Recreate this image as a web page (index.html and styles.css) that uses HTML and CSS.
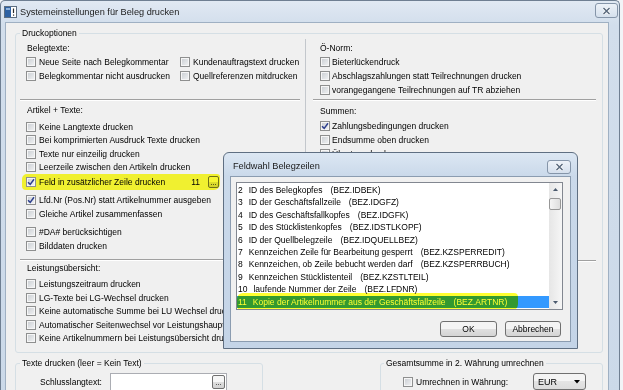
FILE: index.html
```html
<!DOCTYPE html>
<html lang="de">
<head>
  <meta charset="UTF-8">
  <title>Systemeinstellungen für Beleg drucken</title>
  <link rel="stylesheet" href="styles.css">
</head>
<body>

  <div class="window">
    <div class="titlebar">
      <svg class="app-icon" width="13" height="12" viewBox="0 0 13 12">
        <rect x="0.5" y="0.5" width="12" height="11" fill="#fff" stroke="#5d6e80"/>
        <rect x="1" y="1" width="6" height="10" fill="#2f62a3"/>
        <rect x="2" y="2" width="4" height="2" fill="#8fb3dd"/>
        <path d="M9.5 2.5 V7" stroke="#2b2b2b" stroke-width="1.2"/>
        <rect x="9" y="8.5" width="1.2" height="1.2" fill="#2b2b2b"/>
      </svg>
      <span class="title">Systemeinstellungen für Beleg drucken</span>
      <span class="close main-close">
        <svg width="9" height="8" viewBox="0 0 9 8">
          <path d="M1.5 1 L7.5 7 M7.5 1 L1.5 7" stroke="#fff" stroke-width="3"/>
          <path d="M1.5 1 L7.5 7 M7.5 1 L1.5 7" stroke="#5a6a7e" stroke-width="1.5"/>
        </svg>
      </span>
    </div>

    <div class="frame">
      <div class="client">

        <div class="group main-group">
          <div class="group-title">Druckoptionen</div>
          <div class="columns">

            <div class="col col-left">
              <div class="head">Belegtexte:</div>
              <div class="pair-grid">
                <div class="row"><span class="box"></span>Neue Seite nach Belegkommentar</div>
                <div class="row"><span class="box"></span>Kundenauftragstext drucken</div>
                <div class="row"><span class="box"></span>Belegkommentar nicht ausdrucken</div>
                <div class="row"><span class="box"></span>Quellreferenzen mitdrucken</div>
              </div>

              <div class="divider div-left"></div>

              <div class="head head-after">Artikel + Texte:</div>
              <div class="row tight first">
                <span class="box"></span>Keine Langtexte drucken</div>
              <div class="row tight"><span class="box"></span>Bei komprimierten Ausdruck Texte drucken</div>
              <div class="row tight"><span class="box"></span>Texte nur einzeilig drucken</div>
              <div class="row tight"><span class="box"></span>Leerzeile zwischen den Artikeln drucken</div>
              <div class="row field-row">
                <span class="marker"></span>
                <span class="box checked"><svg viewBox="0 0 8 8"><path d="M1 4.2 L3.2 6.4 L7 1.2"/></svg></span>
                Feld in zusätzlicher Zeile drucken
                <span class="field-value">11</span>
                <span class="dots">...</span>
              </div>
              <div class="row lfd"><span class="box checked"><svg viewBox="0 0 8 8"><path d="M1 4.2 L3.2 6.4 L7 1.2"/></svg></span>Lfd.Nr (Pos.Nr) statt Artikelnummer ausgeben</div>
              <div class="row"><span class="box"></span>Gleiche Artikel zusammenfassen</div>
              <div class="row da"><span class="box"></span>#DA# berücksichtigen</div>
              <div class="row"><span class="box"></span>Bilddaten drucken</div>

              <div class="divider div-left div-lower"></div>

              <div class="head">Leistungsübersicht:</div>
              <div class="row first-l"><span class="box"></span>Leistungszeitraum drucken</div>
              <div class="row tight"><span class="box"></span>LG-Texte bei LG-Wechsel drucken</div>
              <div class="row tight"><span class="box"></span>Keine automatische Summe bei LU Wechsel drucken</div>
              <div class="row tight"><span class="box"></span>Automatischer Seitenwechsel vor Leistungshauptgruppe</div>
              <div class="row tight"><span class="box"></span>Keine Artikelnummern bei Leistungsübersicht drucken</div>
            </div>

            <div class="col col-right">
              <div class="head">Ö-Norm:</div>
              <div class="row"><span class="box"></span>Bieterlückendruck</div>
              <div class="row"><span class="box"></span>Abschlagszahlungen statt Teilrechnungen drucken</div>
              <div class="row"><span class="box"></span>vorangegangene Teilrechnungen auf TR abziehen</div>

              <div class="divider div-right"></div>

              <div class="head summen">Summen:</div>
              <div class="row sum-first"><span class="box checked"><svg viewBox="0 0 8 8"><path d="M1 4.2 L3.2 6.4 L7 1.2"/></svg></span>Zahlungsbedingungen drucken</div>
              <div class="row"><span class="box"></span>Endsumme oben drucken</div>
              <div class="row"><span class="box"></span>Übertrag drucken</div>

              <div class="divider div-right div-right-lower"></div>
            </div>

          </div>
        </div>

        <div class="bottom">
          <div class="group texts-group">
            <div class="group-title">Texte drucken (leer = Kein Text)</div>
            <div class="text-row">
              <span class="text-label">Schlusslangtext:</span>
              <span class="textbox"><span class="dots">...</span></span>
            </div>
          </div>
          <div class="group currency-group">
            <div class="group-title">Gesamtsumme in 2. Währung umrechnen</div>
            <div class="currency-row">
              <span class="box"></span>
              <span class="currency-label">Umrechnen in Währung:</span>
              <span class="combo">EUR<svg width="6" height="4" viewBox="0 0 6 4"><path d="M0 0 H6 L3 3.5 Z" fill="#000"/></svg></span>
            </div>
          </div>
        </div>

      </div>
    </div>
  </div>

  <div class="dialog">
    <div class="dlg-titlebar">
      <span class="dlg-title">Feldwahl Belegzeilen</span>
      <span class="close dlg-close">
        <svg width="9" height="8" viewBox="0 0 9 8">
          <path d="M1.5 1 L7.5 7 M7.5 1 L1.5 7" stroke="#fff" stroke-width="3"/>
          <path d="M1.5 1 L7.5 7 M7.5 1 L1.5 7" stroke="#5a6a7e" stroke-width="1.5"/>
        </svg>
      </span>
    </div>
    <div class="dlg-client">
      <div class="listbox">
        <div class="items">
          <div class="item"><span class="num">2</span>ID des Belegkopfes<span class="ref">(BEZ.IDBEK)</span></div>
          <div class="item"><span class="num">3</span>ID der Geschäftsfallzeile<span class="ref">(BEZ.IDGFZ)</span></div>
          <div class="item"><span class="num">4</span>ID des Geschäftsfallkopfes<span class="ref">(BEZ.IDGFK)</span></div>
          <div class="item"><span class="num">5</span>ID des Stücklistenkopfes<span class="ref">(BEZ.IDSTLKOPF)</span></div>
          <div class="item"><span class="num">6</span>ID der Quellbelegzeile<span class="ref">(BEZ.IDQUELLBEZ)</span></div>
          <div class="item"><span class="num">7</span>Kennzeichen Zeile für Bearbeitung gesperrt<span class="ref">(BEZ.KZSPERREDIT)</span></div>
          <div class="item"><span class="num">8</span>Kennzeichen, ob Zeile bebucht werden darf<span class="ref">(BEZ.KZSPERRBUCH)</span></div>
          <div class="item"><span class="num">9</span>Kennzeichen Stücklistenteil<span class="ref">(BEZ.KZSTLTEIL)</span></div>
          <div class="item"><span class="num">10</span>laufende Nummer der Zeile<span class="ref">(BEZ.LFDNR)</span></div>
          <div class="item selected"><span class="num">11</span>Kopie der Artikelnummer aus der Geschäftsfallzeile<span class="ref">(BEZ.ARTNR)</span></div>
          <span class="list-marker"></span>
        </div>
        <div class="scroll">
          <span class="arrow"><svg width="5" height="3" viewBox="0 0 5 3"><path d="M0 3 H5 L2.5 0 Z" fill="#4b5a6e"/></svg></span>
          <span class="thumb"></span>
          <span class="track"></span>
          <span class="arrow"><svg width="5" height="3" viewBox="0 0 5 3"><path d="M0 0 H5 L2.5 3 Z" fill="#4b5a6e"/></svg></span>
        </div>
      </div>
      <div class="dlg-buttons">
        <span class="btn btn-ok">OK</span>
        <span class="btn btn-cancel">Abbrechen</span>
      </div>
    </div>
  </div>

</body>
</html>
```

FILE: styles.css
```css
body {
  margin: 0;
  width: 623px;
  height: 390px;
  overflow: hidden;
  position: relative;
  background: #f2f4f7;
  font-family: "Liberation Sans", Arial, sans-serif;
  font-size: 8.5px;
  color: #000;
}

/* main window */
.window {
  width: 620px;
  height: 400px;
  box-sizing: border-box;
  border: 1px solid #6f7f92;
  border-bottom: none;
  border-radius: 5px 5px 0 0;
  background: linear-gradient(#e1e9f3, #d2deec 24px, #cbd9e9);
  display: flex;
  flex-direction: column;
}
.titlebar {
  height: 21px;
  flex: none;
  display: flex;
  align-items: center;
  padding: 0 1px 0 3px;
}
.app-icon {
  flex: none;
}
.title {
  margin-left: 3px;
  font-size: 9.2px;
  color: #1b1b1b;
}
.close {
  display: flex;
  align-items: center;
  justify-content: center;
  box-sizing: border-box;
  border: 1px solid #8595a9;
  border-radius: 3px;
  background: linear-gradient(#edf2f8, #d5e0ed);
}
.main-close {
  width: 23px;
  height: 15px;
  margin-left: auto;
  align-self: flex-start;
  margin-top: 2px;
}
.frame {
  flex: 1;
  padding: 0 10px 0 4px;
}
.client {
  height: 100%;
  box-sizing: border-box;
  background: #f0f0f0;
  border: 1px solid #9fb0c3;
  border-bottom: none;
  padding: 10px 5px 0 9px;
}

/* group boxes */
.group {
  border: 1px solid #d5dfe5;
  border-radius: 3px;
}
.group-title {
  width: fit-content;
  height: 12px;
  line-height: 12px;
  margin: -7px 0 0 4px;
  padding: 0 2px;
  background: #f0f0f0;
}
.main-group {
  height: 320px;
  box-sizing: border-box;
}
.columns {
  display: grid;
  grid-template-columns: 289px 1fr;
}
.col {
  padding-top: 2px;
  white-space: nowrap;
}
.col-left {
  padding-left: 10px;
}
.col-right {
  padding-left: 14px;
  border-left: 1px solid #c3c7cc;
}
.head {
  height: 14px;
  line-height: 14px;
  padding-left: 1px;
}
.col-right .head {
  padding-left: 0;
}
.head-after {
  margin-top: 2px;
}
.summen {
  margin-top: 3px;
}
.row {
  position: relative;
  display: flex;
  align-items: center;
  height: 14px;
  gap: 3px;
}
.col-right .row {
  gap: 2px;
}
.row.tight {
  height: 13.5px;
}
.row.first {
  margin-top: 3px;
}
.row.first-l {
  margin-top: 2px;
}
.row.lfd {
  margin-top: 3px;
}
.row.da {
  margin-top: 4px;
}
.row.sum-first {
  margin-top: 1px;
}
.pair-grid {
  display: grid;
  grid-template-columns: 154px auto;
}

.box {
  position: relative;
  flex: none;
  width: 10px;
  height: 10px;
  box-sizing: border-box;
  border: 1px solid #8e8f8f;
  box-shadow: inset 0 0 0 1px #f6f6f6;
  background: linear-gradient(135deg, #c8ccd1, #f3f4f5);
}
.box svg {
  position: absolute;
  left: 0;
  top: 0;
  width: 8px;
  height: 8px;
}
.box svg path {
  fill: none;
  stroke: #2d3f8e;
  stroke-width: 1.5;
}

.divider {
  height: 0;
  border-top: 1px solid #a0a0a0;
  border-bottom: 1px solid #fff;
}
.div-left {
  margin: 16px 5px 0 -6px;
}
.div-lower {
  margin-top: 6px;
}
.div-right {
  margin: 2px 6px 0 -7px;
}
.div-right-lower {
  margin-top: 99px;
}

/* highlighted field row */
.field-row {
  width: 193px;
  height: 16px;
}
.field-value {
  margin-left: auto;
}
.dots {
  flex: none;
  width: 11px;
  height: 12px;
  box-sizing: border-box;
  margin-left: 5px;
  border: 1px solid #707070;
  border-radius: 2px;
  background: linear-gradient(#f6f6f6 50%, #dedede 50%, #d2d2d2);
  font-size: 8px;
  line-height: 12px;
  text-align: center;
}
.marker {
  position: absolute;
  left: -4px;
  top: 0;
  width: 198px;
  height: 16px;
  border-radius: 5px 3px 6px 4px;
  background: #ffff33;
  mix-blend-mode: multiply;
}

/* lower groups */
.bottom {
  display: flex;
  justify-content: space-between;
  margin-top: 10px;
}
.texts-group {
  width: 248px;
  height: 40px;
  box-sizing: border-box;
}
.currency-group {
  width: 223px;
  height: 40px;
  box-sizing: border-box;
}
.currency-group .group-title {
  margin-left: 3px;
}
.text-row {
  display: flex;
  align-items: center;
  margin-top: 4px;
  padding-left: 24px;
}
.text-label {
  width: 70px;
}
.textbox {
  width: 117px;
  height: 18px;
  box-sizing: border-box;
  border: 1px solid #abadb3;
  background: #fff;
  display: flex;
  align-items: center;
  justify-content: flex-end;
}
.textbox .dots {
  width: 13px;
  height: 14px;
  line-height: 14px;
  margin-right: 1px;
}
.currency-row {
  display: flex;
  align-items: center;
  margin-top: 4px;
  padding: 0 16px 0 22px;
}
.currency-label {
  margin-left: 3px;
}
.combo {
  margin-left: auto;
  width: 53px;
  height: 17px;
  box-sizing: border-box;
  padding: 0 5px 0 4px;
  display: flex;
  align-items: center;
  justify-content: space-between;
  border: 1px solid #707070;
  border-radius: 3px;
  background: linear-gradient(#f4f4f4 50%, #e4e4e4 50%, #dcdcdc);
  font-size: 9px;
}

/* dialog */
.dialog {
  position: absolute;
  left: 223px;
  top: 152px;
  width: 355px;
  height: 197px;
  box-sizing: border-box;
  border: 1px solid #5f6f82;
  border-radius: 6px 6px 0 0;
  background: linear-gradient(#dce7f3, #cad9ea 23px, #c4d4e7);
  padding: 0 6px 6px 6px;
  display: flex;
  flex-direction: column;
}
.dlg-titlebar {
  height: 23px;
  flex: none;
  display: flex;
  align-items: center;
  justify-content: space-between;
}
.dlg-title {
  margin-left: 3px;
  margin-top: 3px;
  font-size: 9.2px;
  color: #1b1b1b;
}
.dlg-close {
  width: 24px;
  height: 14px;
  margin-top: 5px;
}
.dlg-client {
  flex: 1;
  background: #f0f0f0;
  border: 1px solid #8b9cb0;
  padding: 5px 7px 0 5px;
}
.listbox {
  height: 128px;
  box-sizing: border-box;
  border: 1px solid #828790;
  background: #fff;
  display: flex;
}
.items {
  position: relative;
  flex: 1;
  padding-top: 1px;
  overflow: hidden;
}
.item {
  height: 12.4px;
  line-height: 12.4px;
  padding-left: 1px;
  white-space: nowrap;
}
.item.selected {
  background: #3399ff;
  color: #fff;
}
.num {
  margin-right: 6px;
}
.ref {
  margin-left: 8px;
}
.list-marker {
  position: absolute;
  left: 0;
  top: 110px;
  width: 281px;
  height: 18px;
  border-radius: 6px 4px 7px 5px;
  background: #ffff30;
  mix-blend-mode: multiply;
}
.scroll {
  width: 13px;
  flex: none;
  display: flex;
  flex-direction: column;
  background: linear-gradient(90deg, #e6e6e6, #f6f6f6);
}
.arrow {
  height: 13px;
  display: flex;
  align-items: center;
  justify-content: center;
}
.thumb {
  height: 12px;
  margin: 2px 1px 0 0;
  box-sizing: border-box;
  border: 1px solid #979797;
  border-radius: 2px;
  background: linear-gradient(90deg, #f5f5f5, #dedede);
}
.track {
  flex: 1;
}
.dlg-buttons {
  display: flex;
  justify-content: flex-end;
  gap: 8px;
  margin-top: 11px;
  padding-right: 2px;
}
.btn {
  height: 16px;
  box-sizing: border-box;
  border: 1px solid #707070;
  border-radius: 3px;
  background: linear-gradient(#f4f4f4 50%, #e0e0e0 50%, #d4d4d4);
  line-height: 14px;
  text-align: center;
}
.btn-ok {
  width: 57px;
}
.btn-cancel {
  width: 56px;
}
```
